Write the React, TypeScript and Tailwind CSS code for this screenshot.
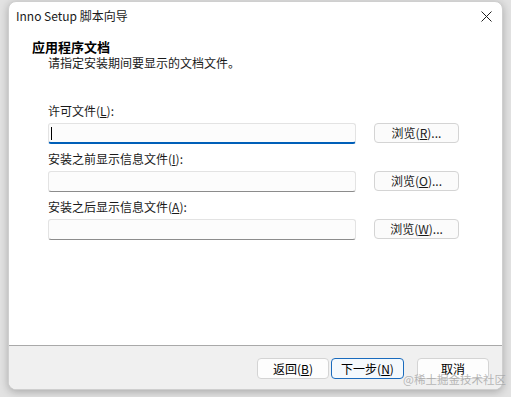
import React from 'react'

const font = { fontFamily: '"Noto Sans CJK SC", "Noto Sans", sans-serif' }

interface FileRowProps {
  label: string
  accel: string
  browseKey: string
  focused?: boolean
}

const FileRow: React.FC<FileRowProps> = ({ label, accel, browseKey, focused }) => (
  <div>
    <div className="h-[16px] leading-[16px] text-[12px] text-[#1a1a1a]">
      {label}(<span className="underline">{accel}</span>):
    </div>
    <div className="mt-[4px] flex items-start gap-[18px]">
      <div
        className={`w-[308px] h-[21px] bg-[#fcfcfc] border border-[#e3e3e3] rounded-[3px] flex items-center pl-[2px] ${
          focused ? 'border-b-2 border-b-[#005fb8]' : 'border-b-[#8c8c8c]'
        }`}
      >
        {focused && <div className="w-px h-[13px] bg-black" />}
      </div>
      <button className="w-[85px] h-[20px] bg-[#fbfbfb] border border-[#d4d4d4] rounded-[4px] text-[12px] leading-[18px] text-[#1a1a1a]">
        浏览(<span className="underline">{browseKey}</span>)...
      </button>
    </div>
  </div>
)

export default function App() {
  return (
    <div className="relative w-[511px] h-[397px] bg-[#e2e2e2] pl-[8px] pt-[1px]" style={font}>
      <div className="w-[495px] h-[389px] rounded-[8px] bg-white flex flex-col overflow-hidden shadow-[0_2px_8px_rgba(0,0,0,0.25)] border border-[#cfcfcf]">
        {/* title bar */}
        <div className="h-[28px] flex items-center justify-between pl-[7px] pr-[10px] shrink-0">
          <span className="text-[12px] leading-[16px] text-[#1a1a1a]">Inno Setup 脚本向导</span>
          <svg width="11" height="11" viewBox="0 0 11 11" className="mt-[1px]">
            <path d="M0.5 0.5 L10.5 10.5 M10.5 0.5 L0.5 10.5" stroke="#1f1f1f" strokeWidth="1" />
          </svg>
        </div>

        {/* page content */}
        <div className="flex-1 bg-white pl-[23px]">
          <div className="mt-[9px] h-[16px] leading-[16px] text-[13px] font-bold text-black">应用程序文档</div>
          <div className="h-[16px] leading-[16px] pl-[16px] text-[12px] text-[#1a1a1a]">请指定安装期间要显示的文档文件。</div>

          <div className="pl-[16px] mt-[32px] flex flex-col gap-[7px]">
            <FileRow label="许可文件" accel="L" browseKey="R" focused />
            <FileRow label="安装之前显示信息文件" accel="I" browseKey="O" />
            <FileRow label="安装之后显示信息文件" accel="A" browseKey="W" />
          </div>
        </div>

        {/* footer */}
        <div className="h-[44px] shrink-0 bg-[#f0f0f0] border-t border-[#a9a9a9] flex justify-end items-start pt-[12px] pr-[13px]">
          <button className="w-[72px] h-[21px] bg-[#fdfdfd] border border-[#d4d4d4] rounded-[4px] text-[12px] leading-[19px] text-black">
            返回(<span className="underline">B</span>)
          </button>
          <button className="ml-[2px] w-[73px] h-[21px] bg-[#f4f9fd] border border-[#1a6bbd] rounded-[4px] text-[12px] leading-[19px] text-black">
            下一步(<span className="underline">N</span>)
          </button>
          <button className="ml-[13px] w-[72px] h-[21px] bg-[#fdfdfd] border border-[#d4d4d4] rounded-[4px] text-[12px] leading-[19px] text-black">
            取消
          </button>
        </div>
      </div>

      {/* watermark */}
      <div className="absolute left-[403px] top-[371px] text-[11.5px] leading-[16px] text-[#9a9a9a]/70 whitespace-nowrap">
        @稀土掘金技术社区
      </div>
    </div>
  )
}
